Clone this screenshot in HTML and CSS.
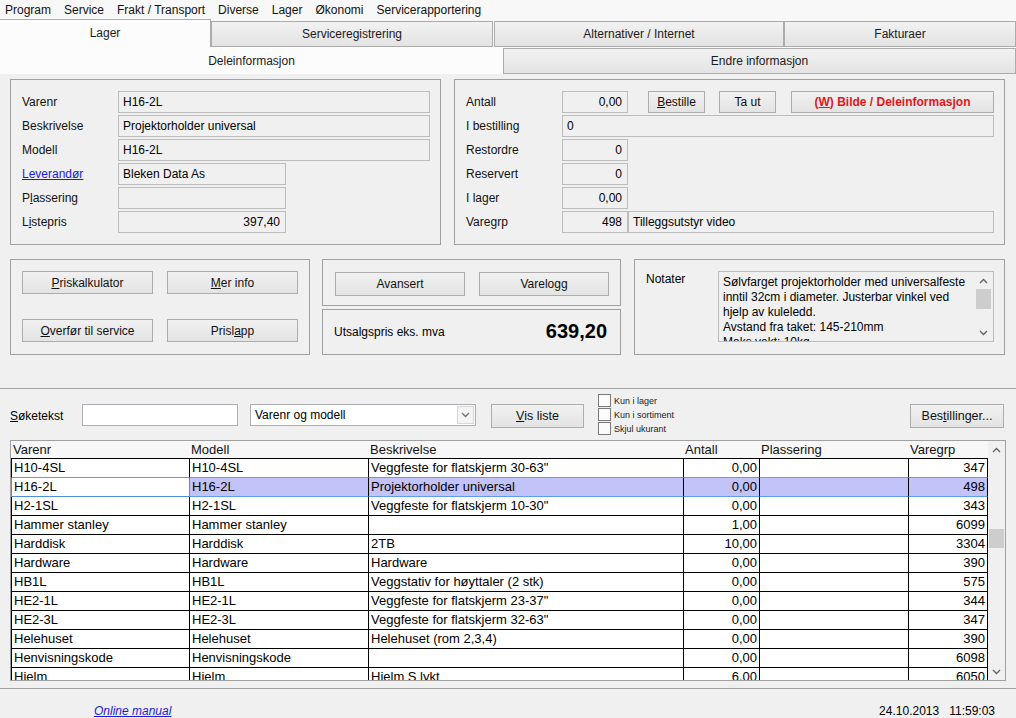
FILE: index.html
```html
<!DOCTYPE html>
<html>
<head>
<meta charset="utf-8">
<link rel="stylesheet" href="styles.css">
</head>
<body>
<div class="menubar">
  <span>Program</span><span>Service</span><span>Frakt / Transport</span><span>Diverse</span><span>Lager</span><span>Økonomi</span><span>Servicerapportering</span>
</div>

<div class="tabs tabs1">
  <div class="tab sel t-lager">Lager</div>
  <div class="tab t-serv">Serviceregistrering</div>
  <div class="tab t-alt">Alternativer / Internet</div>
  <div class="tab t-fakt">Fakturaer</div>
</div>
<div class="tabs tabs2">
  <div class="tab sel t-dele">Deleinformasjon</div>
  <div class="tab t-endre">Endre informasjon</div>
</div>

<div class="panel">
  <div class="row1">
    <div class="box box1">
      <div class="frow"><div class="lbl">Varenr</div><div class="fld w312">H16-2L</div></div>
      <div class="frow"><div class="lbl">Beskrivelse</div><div class="fld w312">Projektorholder universal</div></div>
      <div class="frow"><div class="lbl">Modell</div><div class="fld w312">H16-2L</div></div>
      <div class="frow"><div class="lbl"><a class="link">Leverandør</a></div><div class="fld w168">Bleken Data As</div></div>
      <div class="frow"><div class="lbl">P<u>l</u>assering</div><div class="fld w168"></div></div>
      <div class="frow"><div class="lbl">L<u>i</u>stepris</div><div class="fld w168 num">397,40</div></div>
    </div>
    <div class="box box2">
      <div class="frow">
        <div class="lbl">Antall</div><div class="fld w66 num">0,00</div>
        <div class="btn b-best"><u>B</u>estille</div>
        <div class="btn b-taut">Ta ut</div>
        <div class="btn b-bilde">(<u>W</u>) Bilde / Deleinformasjon</div>
      </div>
      <div class="frow"><div class="lbl">I bestilling</div><div class="fld w432">0</div></div>
      <div class="frow"><div class="lbl">Restordre</div><div class="fld w66 num">0</div></div>
      <div class="frow"><div class="lbl">Reservert</div><div class="fld w66 num">0</div></div>
      <div class="frow"><div class="lbl">I lager</div><div class="fld w66 num">0,00</div></div>
      <div class="frow"><div class="lbl">Varegrp</div><div class="fld w66 num">498</div><div class="fld w366">Tilleggsutstyr video</div></div>
    </div>
  </div>

  <div class="row2">
    <div class="box box3">
      <div class="bgrid">
        <div class="btn"><u>P</u>riskalkulator</div>
        <div class="btn"><u>M</u>er info</div>
        <div class="btn"><u>O</u>verfør til service</div>
        <div class="btn">Prisl<u>a</u>pp</div>
      </div>
    </div>
    <div class="midcol">
      <div class="box box4">
        <div class="btn b-mid">Avansert</div>
        <div class="btn b-mid">Varelogg</div>
      </div>
      <div class="box box5">
        <span>Utsalgspris eks. mva</span>
        <span class="price">639,20</span>
      </div>
    </div>
    <div class="box box6">
      <div class="nlbl">Notater</div>
      <div class="notes">
        <div class="ntext">Sølvfarget projektorholder med universalfeste<br>inntil 32cm i diameter. Justerbar vinkel ved<br>hjelp av kuleledd.<br>Avstand fra taket: 145-210mm<br>Maks vekt: 10kg</div>
        <div class="nsb">
          <div class="arr"><svg width="9" height="6" viewBox="0 0 9 6"><path d="M1 5 L4.5 1.5 L8 5" fill="none" stroke="#606060" stroke-width="1.3"/></svg></div>
          <div class="ntrack"><div class="nthumb"></div></div>
          <div class="arr"><svg width="9" height="6" viewBox="0 0 9 6"><path d="M1 1 L4.5 4.5 L8 1" fill="none" stroke="#606060" stroke-width="1.3"/></svg></div>
        </div>
      </div>
    </div>
  </div>
</div>

<div class="search">
  <div class="slbl"><u>S</u>øketekst</div>
  <div class="sinput"></div>
  <div class="ssel">
    <span class="sseltext">Varenr og modell</span>
    <span class="sarrow"><svg width="9" height="6" viewBox="0 0 9 6"><path d="M1 1 L4.5 4.5 L8 1" fill="none" stroke="#707070" stroke-width="1.3"/></svg></span>
  </div>
  <div class="btn b-vis"><u>V</u>is liste</div>
  <div class="checks">
    <div class="chk"><span class="cbox"></span>Kun i lager</div>
    <div class="chk"><span class="cbox"></span>Kun i sortiment</div>
    <div class="chk"><span class="cbox"></span>Skjul ukurant</div>
  </div>
  <div class="btn b-bestil">Bes<u>t</u>illinger...</div>
</div>

<div class="grid">
  <div class="gbody">
    <table class="dt">
      <colgroup><col class="c1"><col class="c2"><col class="c3"><col class="c4"><col class="c5"><col class="c6"></colgroup>
      <thead>
        <tr><th>Varenr</th><th>Modell</th><th>Beskrivelse</th><th>Antall</th><th>Plassering</th><th>Varegrp</th></tr>
      </thead>
      <tbody>
        <tr class="presel"><td>H10-4SL</td><td>H10-4SL</td><td>Veggfeste for flatskjerm 30-63"</td><td class="r">0,00</td><td></td><td class="r">347</td></tr>
        <tr class="sel"><td class="focus">H16-2L</td><td>H16-2L</td><td>Projektorholder universal</td><td class="r">0,00</td><td></td><td class="r">498</td></tr>
        <tr><td>H2-1SL</td><td>H2-1SL</td><td>Veggfeste for flatskjerm 10-30"</td><td class="r">0,00</td><td></td><td class="r">343</td></tr>
        <tr><td>Hammer stanley</td><td>Hammer stanley</td><td></td><td class="r">1,00</td><td></td><td class="r">6099</td></tr>
        <tr><td>Harddisk</td><td>Harddisk</td><td>2TB</td><td class="r">10,00</td><td></td><td class="r">3304</td></tr>
        <tr><td>Hardware</td><td>Hardware</td><td>Hardware</td><td class="r">0,00</td><td></td><td class="r">390</td></tr>
        <tr><td>HB1L</td><td>HB1L</td><td>Veggstativ for høyttaler (2 stk)</td><td class="r">0,00</td><td></td><td class="r">575</td></tr>
        <tr><td>HE2-1L</td><td>HE2-1L</td><td>Veggfeste for flatskjerm 23-37"</td><td class="r">0,00</td><td></td><td class="r">344</td></tr>
        <tr><td>HE2-3L</td><td>HE2-3L</td><td>Veggfeste for flatskjerm 32-63"</td><td class="r">0,00</td><td></td><td class="r">347</td></tr>
        <tr><td>Helehuset</td><td>Helehuset</td><td>Helehuset (rom 2,3,4)</td><td class="r">0,00</td><td></td><td class="r">390</td></tr>
        <tr><td>Henvisningskode</td><td>Henvisningskode</td><td></td><td class="r">0,00</td><td></td><td class="r">6098</td></tr>
        <tr><td>Hjelm</td><td>Hjelm</td><td>Hjelm S lykt</td><td class="r">6,00</td><td></td><td class="r">6050</td></tr>
      </tbody>
    </table>
  </div>
  <div class="vsb">
    <div class="arr garr"><svg width="9" height="6" viewBox="0 0 9 6"><path d="M1 5 L4.5 1.5 L8 5" fill="none" stroke="#606060" stroke-width="1.3"/></svg></div>
    <div class="gtrack"><div class="gthumb"></div></div>
    <div class="arr garr"><svg width="9" height="6" viewBox="0 0 9 6"><path d="M1 1 L4.5 4.5 L8 1" fill="none" stroke="#606060" stroke-width="1.3"/></svg></div>
  </div>
</div>

<div class="status">
  <a class="manual">Online manual</a>
  <span class="date">24.10.2013</span>
  <span class="time">11:59:03</span>
</div>
</body>
</html>
```

FILE: styles.css
```css
* { box-sizing: border-box; }
html, body { margin: 0; padding: 0; }
body {
  width: 1016px;
  height: 718px;
  overflow: hidden;
  background: #f0f0f0;
  font-family: "Liberation Sans", Arial, sans-serif;
  font-size: 12px;
  color: #000;
}
u { text-decoration: underline; }

/* menu */
.menubar {
  height: 19px;
  background: #f8f8f8;
  display: flex;
  align-items: center;
  padding-left: 5px;
  color: #111;
}
.menubar span { margin-right: 13px; }

/* tabs */
.tabs { display: flex; background: #f8f8f8; }
.tabs1 { height: 28px; }
.tabs2 { height: 27px; }
.tab {
  display: flex;
  align-items: center;
  justify-content: center;
  border: 1px solid #acacac;
  background: linear-gradient(#f2f2f2, #e3e3e3);
  color: #1a1a1a;
}
.tabs1 .tab { margin-top: 2px; height: 26px; }
.tabs1 .tab.sel { margin-top: 0; height: 28px; }
.tab.sel { background: #fcfcfc; border-bottom: none; border-left: none; }
.t-lager { width: 211px; padding-bottom: 1px; }
.t-serv { width: 282px; }
.t-alt { width: 290px; margin-left: 1px; }
.t-fakt { width: 232px; }
.t-dele { width: 503px; border: none; height: 27px; }
.tabs2 .t-endre { width: 513px; margin-top: 1px; height: 26px; }

/* panel */
.panel {
  height: 315px;
  border-bottom: 1px solid #a0a0a0;
  padding: 5px 0 0 10px;
}
.row1 { display: flex; gap: 13px; height: 166px; }
.row2 { display: flex; height: 96px; margin-top: 14px; }
.box { border: 1px solid #a0a0a0; }
.box1 { width: 431px; padding: 11px 0 0 11px; }
.box2 { width: 551px; padding: 11px 0 0 11px; }
.frow { display: flex; align-items: center; height: 22px; margin-bottom: 2px; }
.lbl { width: 96px; color: #111; }
.link { color: #1a1adc; text-decoration: underline; }
.fld {
  height: 22px;
  border: 1px solid #bcbcbc;
  background: #f0f0f0;
  padding: 0 4px;
  line-height: 20px;
  white-space: nowrap;
  overflow: hidden;
}
.fld.num { text-align: right; padding-right: 5px; }
.w312 { width: 312px; }
.w168 { width: 168px; }
.w66 { width: 66px; }
.w432 { width: 432px; }
.w366 { width: 366px; }

.btn {
  display: flex;
  align-items: center;
  justify-content: center;
  border: 1px solid #adadad;
  background: linear-gradient(#f1f1f1, #e3e3e3);
  color: #111;
  white-space: nowrap;
}
.b-best { width: 57px; height: 22px; margin-left: 20px; }
.b-taut { width: 57px; height: 22px; margin-left: 14px; }
.b-bilde { width: 203px; height: 22px; margin-left: 15px; color: #e8141c; font-weight: bold; }

.box3 { width: 300px; padding: 11px 0 0 11px; }
.bgrid {
  display: grid;
  grid-template-columns: 131px 131px;
  grid-auto-rows: 23px;
  column-gap: 14px;
  row-gap: 25px;
}
.midcol { width: 299px; margin-left: 12px; display: flex; flex-direction: column; gap: 3px; }
.box4 { height: 47px; display: flex; gap: 14px; padding: 12px 0 0 12px; }
.b-mid { width: 130px; height: 24px; }
.box5 {
  height: 47px;
  display: flex;
  align-items: center;
  justify-content: space-between;
  padding: 0 13px 0 11px;
}
.price { font-size: 20px; font-weight: bold; }

.box6 { width: 371px; margin-left: 13px; display: flex; padding: 11px 0 0 11px; }
.nlbl { width: 72px; padding-top: 1px; }
.notes {
  width: 276px;
  height: 71px;
  border: 1px solid #bcbcbc;
  background: #f0f0f0;
  display: flex;
}
.ntext {
  flex: 1;
  padding: 3px 0 0 4px;
  line-height: 15px;
  overflow: hidden;
  white-space: nowrap;
}
.nsb { width: 17px; display: flex; flex-direction: column; margin-right: 1px; }
.arr { height: 17px; display: flex; align-items: center; justify-content: center; }
.ntrack { flex: 1; }
.nthumb { height: 20px; background: #cdcdcd; margin: 0 1px; }

/* search */
.search {
  height: 51px;
  display: flex;
  align-items: center;
  padding-left: 10px;
}
.slbl { width: 72px; padding-top: 3px; }
.sinput { width: 156px; height: 22px; background: #fff; border: 1px solid #abadb3; }
.ssel {
  width: 226px;
  height: 22px;
  margin-left: 12px;
  background: #fff;
  border: 1px solid #abadb3;
  display: flex;
  align-items: center;
  padding: 0 1px 0 4px;
}
.sseltext { flex: 1; }
.sarrow {
  width: 17px;
  height: 18px;
  border: 1px solid #d6d6d6;
  background: #f4f4f4;
  display: flex;
  align-items: center;
  justify-content: center;
}
.b-vis { width: 93px; height: 24px; margin-left: 15px; margin-top: 3px; font-size: 12.5px; }
.checks { margin-left: 14px; display: flex; flex-direction: column; }
.chk { height: 14px; display: flex; align-items: center; font-size: 9px; color: #222; }
.cbox {
  width: 13px; height: 13px;
  border: 1px solid #7a7a7a;
  background: #fbfbfb;
  margin-right: 3px;
}
.b-bestil { width: 94px; height: 24px; margin-left: auto; margin-right: 12px; margin-top: 3px; font-size: 12.5px; }

/* grid */
.grid {
  margin-left: 10px;
  width: 996px;
  height: 241px;
  border: 1px solid #a0a0a0;
  background: #fff;
  display: flex;
  overflow: hidden;
}
.gbody { width: 977px; overflow: hidden; }
.dt {
  table-layout: fixed;
  border-collapse: separate;
  border-spacing: 0;
  width: 977px;
  font-size: 13px;
}
.c1 { width: 179px; }
.c2 { width: 179px; }
.c3 { width: 315px; }
.c4 { width: 76px; }
.c5 { width: 149px; }
.c6 { width: 79px; }
.dt th {
  font-weight: normal;
  text-align: left;
  height: 18px;
  line-height: 17px;
  padding: 0 0 0 1px;
  border-bottom: 1px solid #000;
  background: #f7f7f7;
  color: #111;
}
.dt th:first-child { padding-left: 2px; }
.dt td {
  line-height: 18px;
  padding: 0 2px 0 2px;
  border-right: 1px solid #000;
  border-bottom: 1px solid #000;
  white-space: nowrap;
  overflow: hidden;
}
.dt td:first-child { border-left: 1px solid #000; }
.dt td.r { text-align: right; }
.dt tr.presel td { border-bottom-color: #5e9fe4; }
.dt tr.sel td { background: #c2c3f8; border-bottom-color: #5e9fe4; }
.dt tr.sel td.focus { background: #fff; border: 1px solid #4a8fdc; border-top: none; }
.vsb { width: 17px; background: #f0f0f0; display: flex; flex-direction: column; }
.gtrack { flex: 1; }
.gthumb { height: 19px; margin: 71px 1px 0 1px; background: #cdcdcd; }

/* status */
.status {
  margin-top: 7px;
  border-top: 1px solid #a0a0a0;
  height: 30px;
  display: flex;
  padding: 15px 21px 0 94px;
  line-height: 14px;
}
.manual { color: #1a1ad8; font-style: italic; text-decoration: underline; }
.date { margin-left: auto; }
.time { margin-left: 10px; }
```
